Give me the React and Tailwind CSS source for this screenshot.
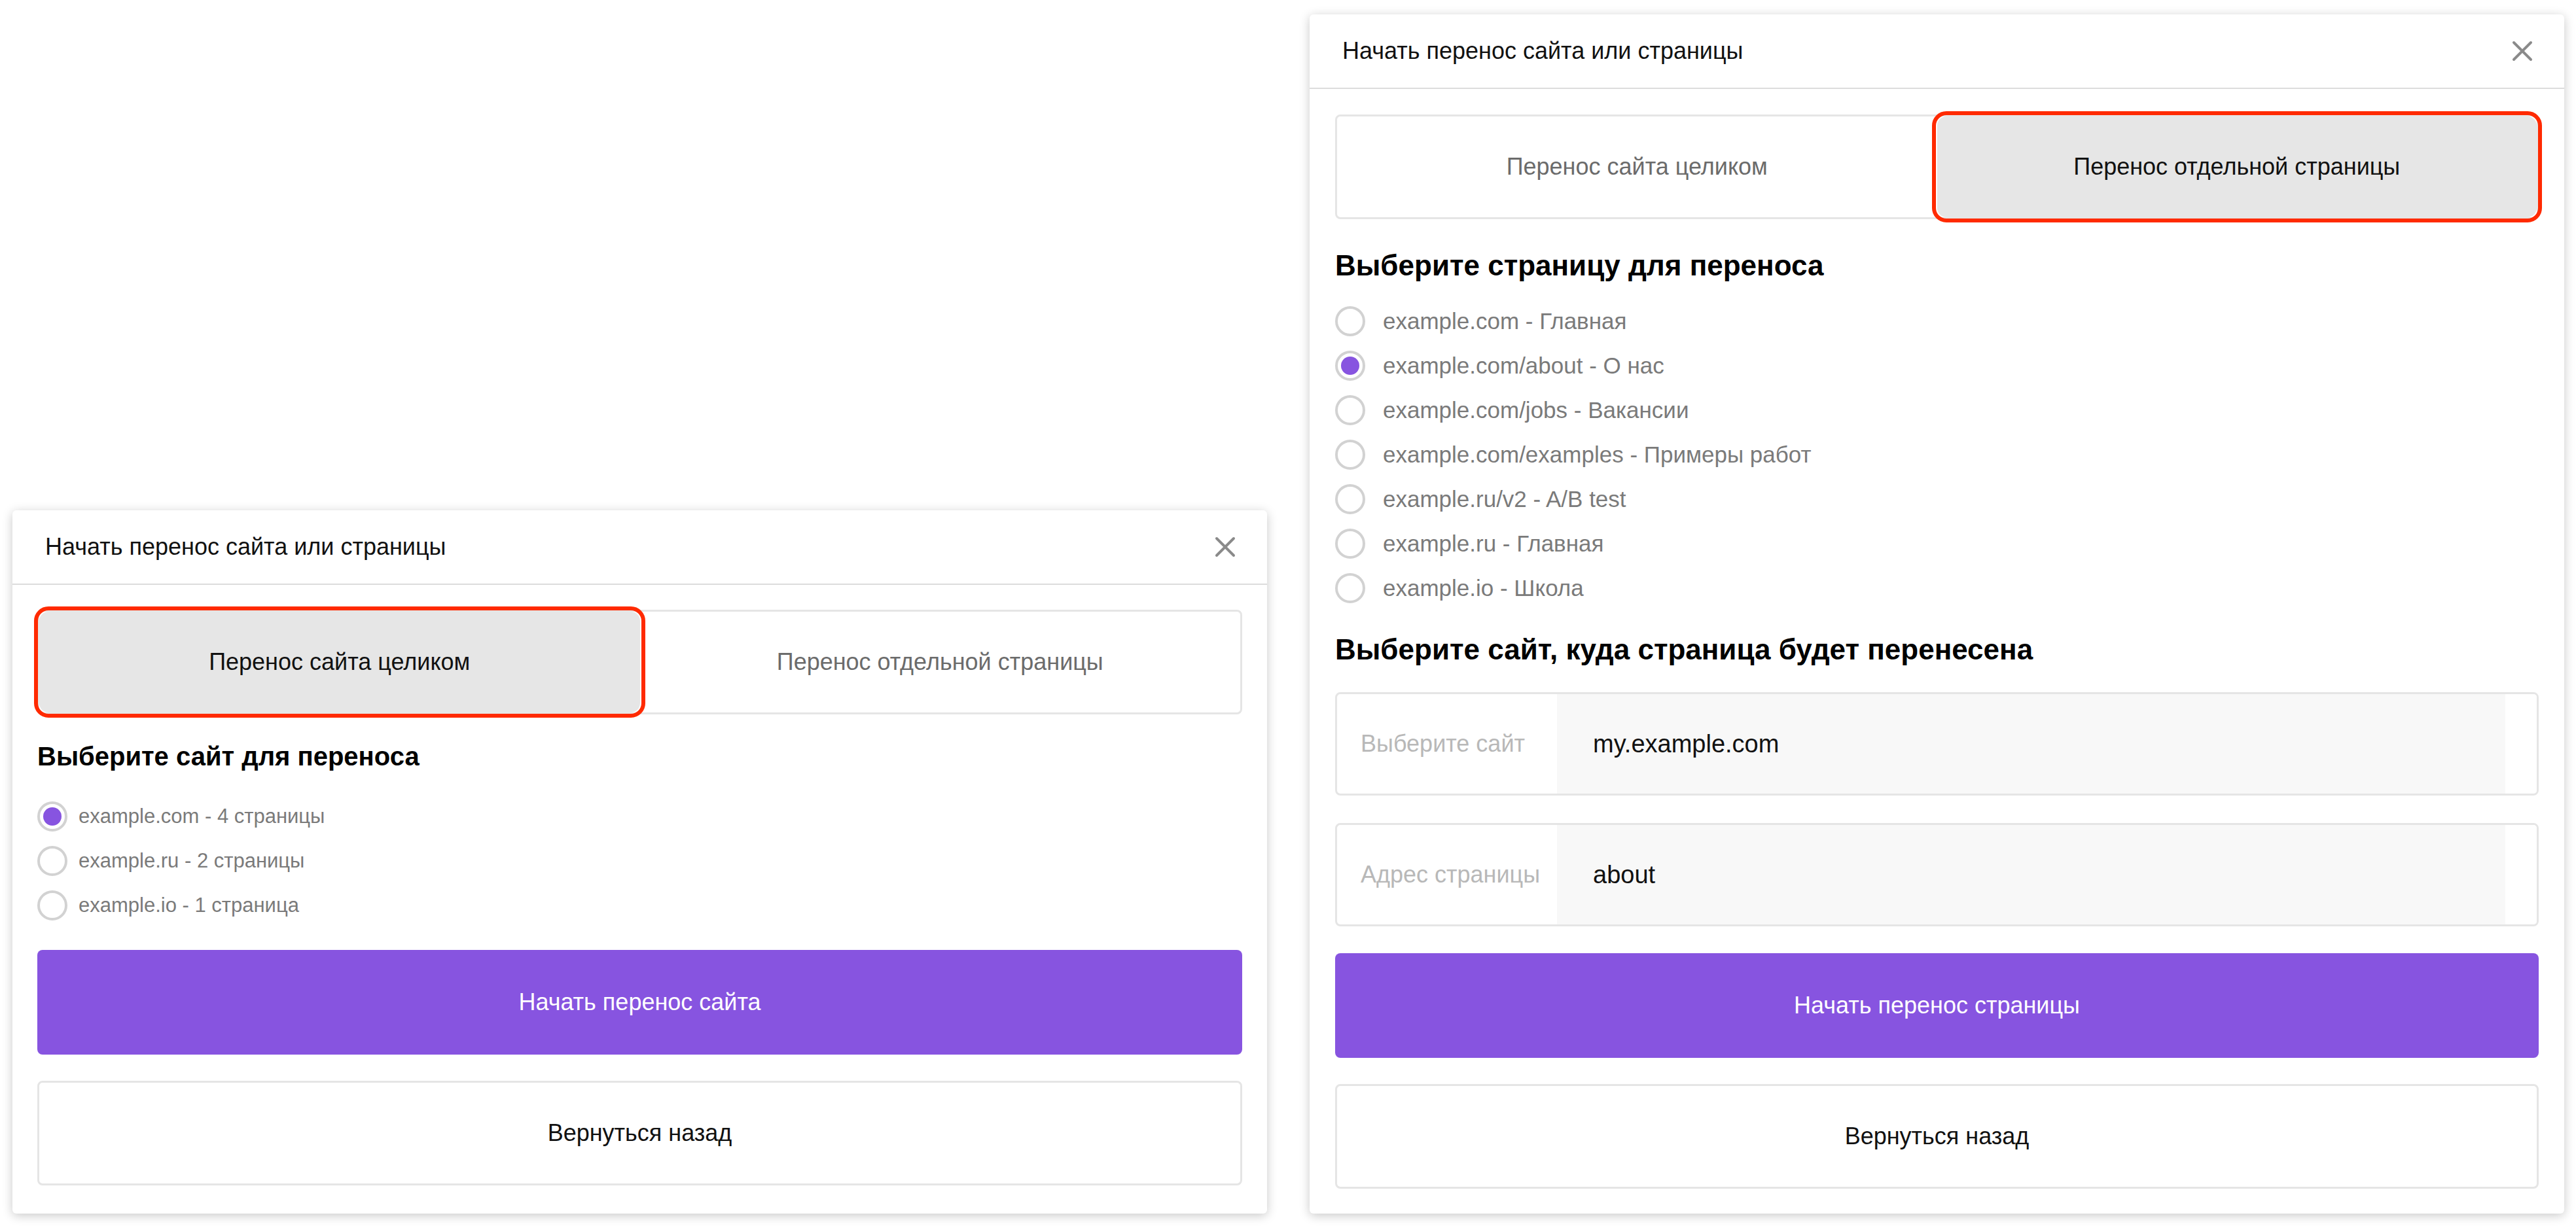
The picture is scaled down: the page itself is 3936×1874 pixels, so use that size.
import React, { useState } from 'react';

const FONT = "font-['Liberation_Sans',Arial,sans-serif]";

const SITES = [
  { id: 'com', label: 'example.com - 4 страницы' },
  { id: 'ru', label: 'example.ru - 2 страницы' },
  { id: 'io', label: 'example.io - 1 страница' },
];

const PAGES = [
  { id: 'main', label: 'example.com - Главная' },
  { id: 'about', label: 'example.com/about - О нас' },
  { id: 'jobs', label: 'example.com/jobs - Вакансии' },
  { id: 'examples', label: 'example.com/examples - Примеры работ' },
  { id: 'v2', label: 'example.ru/v2 - A/B test' },
  { id: 'rumain', label: 'example.ru - Главная' },
  { id: 'school', label: 'example.io - Школа' },
];

function CloseIcon() {
  return (
    <svg width="32" height="32" viewBox="0 0 32 32" fill="none">
      <path d="M3 3 L29 29 M29 3 L3 29" stroke="#8a8a8a" strokeWidth="4" strokeLinecap="round" />
    </svg>
  );
}

function Dialog({ children }) {
  return (
    <div className="w-[1917px] shrink-0 bg-white rounded-[6px] shadow-[0_3px_16px_rgba(0,0,0,0.22)]">
      <div className="h-[114px] flex items-center justify-between pl-[50px] pr-[48px] border-b-2 border-[#dcdcdc]">
        <span className="text-[36px] text-[#111]">Начать перенос сайта или страницы</span>
        <button className="flex items-center justify-center">
          <CloseIcon />
        </button>
      </div>
      {children}
    </div>
  );
}

function ModeTabs({ mode, onChange }) {
  const tabs = [
    { id: 'site', label: 'Перенос сайта целиком' },
    { id: 'page', label: 'Перенос отдельной страницы' },
  ];
  return (
    <div className="h-[160px] grid grid-cols-2 border-[3px] border-[#e5e5e5] rounded-[8px]">
      {tabs.map((tab) => (
        <button
          key={tab.id}
          onClick={() => onChange(tab.id)}
          className={`text-[36px] ${
            mode === tab.id
              ? 'bg-[#e6e6e6] text-[#111] rounded-[14px] outline-[6px] outline-[#ff2a00] outline-offset-[2px]'
              : 'text-[#6b6b6b]'
          }`}
        >
          {tab.label}
        </button>
      ))}
    </div>
  );
}

function Radio({ checked, label, size, gap, onClick }) {
  return (
    <button onClick={onClick} className={`h-[68px] flex items-center ${gap}`}>
      <span className="w-[46px] h-[46px] rounded-full border-[4px] border-[#d2d2d2] flex items-center justify-center shrink-0">
        {checked && <span className="w-[28px] h-[28px] rounded-full bg-[#8754e0]" />}
      </span>
      <span className={`${size} text-[#7a7a7a]`}>{label}</span>
    </button>
  );
}

function Field({ label, value }) {
  return (
    <div className="h-[158px] flex border-[3px] border-[#e5e5e5] rounded-[8px] overflow-hidden">
      <div className="w-[336px] flex items-center pl-[36px] text-[36px] text-[#b8b8b8]">{label}</div>
      <div className="flex-1 flex items-center pl-[55px] bg-[#f8f8f8] text-[38px] text-[#111]">{value}</div>
      <div className="w-[48px] bg-white" />
    </div>
  );
}

function Actions({ label, top }) {
  return (
    <>
      <button className={`${top} w-full h-[160px] rounded-[8px] bg-[#8754e0] text-white text-[36px]`}>{label}</button>
      <button className="mt-[40px] w-full h-[160px] rounded-[8px] border-[3px] border-[#e5e5e5] text-[#111] text-[36px]">
        Вернуться назад
      </button>
    </>
  );
}

export default function App() {
  const [siteMode, setSiteMode] = useState('site');
  const [pageMode, setPageMode] = useState('page');
  const [site, setSite] = useState('com');
  const [page, setPage] = useState('about');

  return (
    <div className={`${FONT} w-[3936px] h-[1874px] bg-white flex items-end gap-[65px] p-[19px]`}>
      <Dialog>
        <div className="px-[38px] pt-[38px] pb-[43px] flex flex-col">
          <ModeTabs mode={siteMode} onChange={setSiteMode} />
          <h2 className="mt-[43px] text-[40px] leading-[43px] font-bold text-black">Выберите сайт для переноса</h2>
          <div className="mt-[36px] flex flex-col items-start">
            {SITES.map((s) => (
              <Radio
                key={s.id}
                checked={site === s.id}
                label={s.label}
                size="text-[31px]"
                gap="gap-[17px]"
                onClick={() => setSite(s.id)}
              />
            ))}
          </div>
          <Actions label="Начать перенос сайта" top="mt-[34px]" />
        </div>
      </Dialog>

      <Dialog>
        <div className="px-[39px] pt-[39px] pb-[38px] flex flex-col">
          <ModeTabs mode={pageMode} onChange={setPageMode} />
          <h2 className="mt-[49px] text-[44px] leading-[43px] font-bold text-black">Выберите страницу для переноса</h2>
          <div className="mt-[30px] flex flex-col items-start">
            {PAGES.map((p) => (
              <Radio
                key={p.id}
                checked={page === p.id}
                label={p.label}
                size="text-[35px]"
                gap="gap-[27px]"
                onClick={() => setPage(p.id)}
              />
            ))}
          </div>
          <h2 className="mt-[38px] text-[44px] leading-[43px] font-bold text-black">
            Выберите сайт, куда страница будет перенесена
          </h2>
          <div className="mt-[44px] flex flex-col gap-[42px]">
            <Field label="Выберите сайт" value="my.example.com" />
            <Field label="Адрес страницы" value="about" />
          </div>
          <Actions label="Начать перенос страницы" top="mt-[41px]" />
        </div>
      </Dialog>
    </div>
  );
}
